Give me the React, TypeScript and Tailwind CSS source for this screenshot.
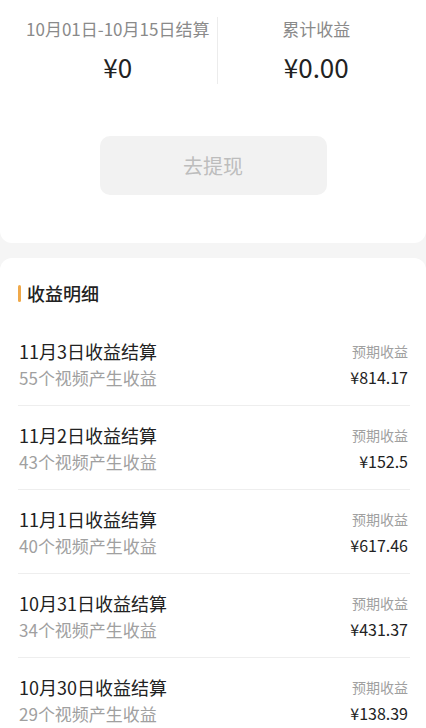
const records = [
  { date: "11月3日", videos: 55, amount: "814.17" },
  { date: "11月2日", videos: 43, amount: "152.5" },
  { date: "11月1日", videos: 40, amount: "617.46" },
  { date: "10月31日", videos: 34, amount: "431.37" },
  { date: "10月30日", videos: 29, amount: "138.39" },
];

function SummaryCard() {
  return (
    <div className="rounded-b-[12px] bg-white pb-[48px] pt-[17px]">
      <div className="flex pl-[19px] pr-[11px]">
        <div className="flex flex-1 flex-col items-center">
          <div className="text-[17px] leading-[24px] text-[#8a8a8a]">10月01日-10月15日结算</div>
          <div className="mt-[9px] text-[26px] leading-[34px] text-[#222]">¥0</div>
        </div>
        <div className="h-[67px] w-px bg-[#ececec]" />
        <div className="flex flex-1 flex-col items-center">
          <div className="text-[17px] leading-[24px] text-[#8a8a8a]">累计收益</div>
          <div className="mt-[9px] text-[26px] leading-[34px] text-[#222]">¥0.00</div>
        </div>
      </div>
      <button className="mx-auto mt-[52px] flex h-[59px] w-[227px] items-center justify-center rounded-[10px] bg-[#f2f2f2] text-[20px] text-[#bdbdbd]">
        去提现
      </button>
    </div>
  );
}

function RecordRow({ date, videos, amount }: { date: string; videos: number; amount: string }) {
  return (
    <div className="flex items-start justify-between border-b border-[#eeeeee] pb-[15px] pt-[16px]">
      <div className="pl-px">
        <div className="text-[18px] leading-[26px] text-[#222]">{date}收益结算</div>
        <div className="mt-[2px] text-[17px] leading-[24px] text-[#a0a0a0]">{videos}个视频产生收益</div>
      </div>
      <div className="flex flex-col items-end pr-[2px]">
        <div className="text-[14px] leading-[26px] text-[#a0a0a0]">预期收益</div>
        <div className="mt-[1px] text-[16px] leading-[24px] text-[#222]">¥{amount}</div>
      </div>
    </div>
  );
}

export default function App() {
  return (
    <div
      className="min-h-screen bg-[#f5f5f5]"
      style={{ fontFamily: '"Noto Sans CJK SC", "Noto Sans", sans-serif' }}
    >
      <SummaryCard />
      <div className="mt-[15px] rounded-t-[12px] bg-white pt-[22px]">
        <div className="flex items-center pl-[18px]">
          <div className="h-[17px] w-[3px] rounded-full bg-[#f0a94a]" />
          <div className="ml-[6px] text-[18px] font-medium leading-[26px] text-[#222]">收益明细</div>
        </div>
        <div className="mt-[16px] pl-[18px] pr-[16px]">
          {records.map((r) => (
            <RecordRow key={r.date} {...r} />
          ))}
        </div>
      </div>
    </div>
  );
}
